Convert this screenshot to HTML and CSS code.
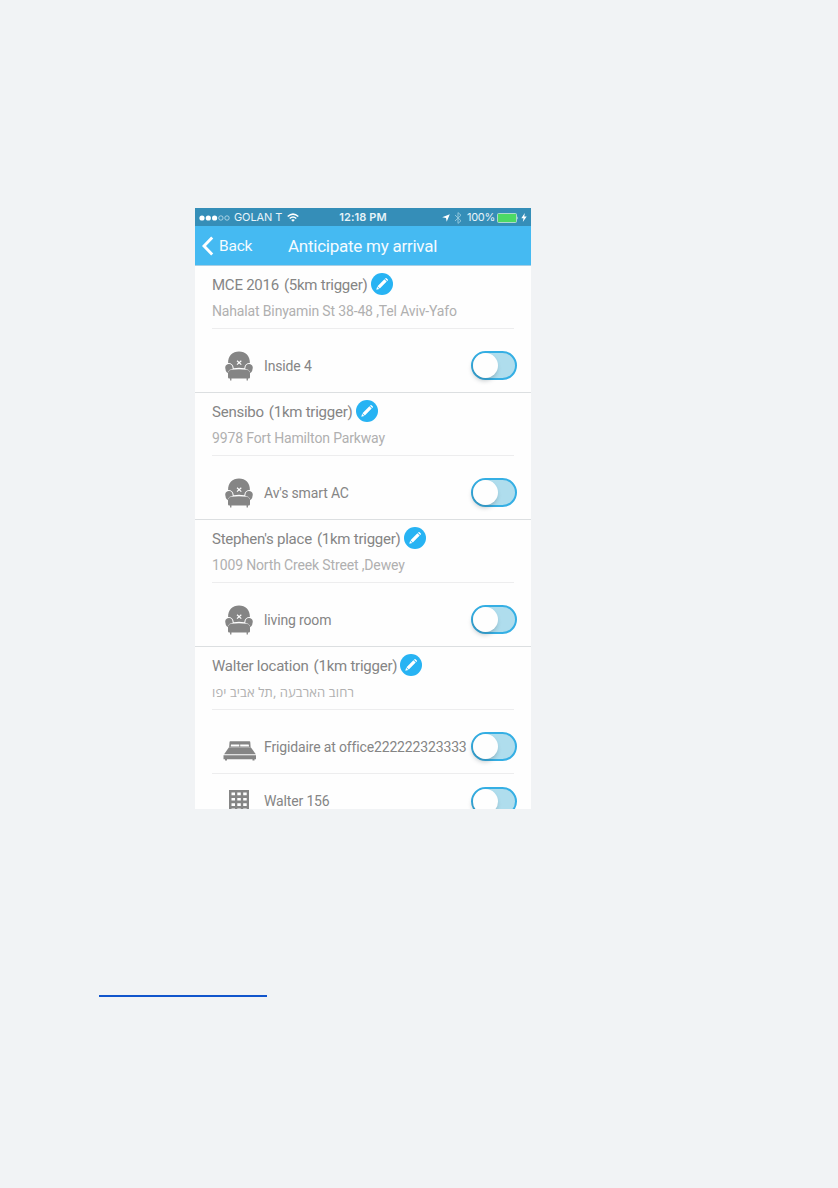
FILE: index.html
```html
<!DOCTYPE html>
<html>
<head>
  <meta charset="utf-8">
  <title>Anticipate my arrival</title>
  <link rel="stylesheet" href="styles.css">
</head>
<body>
  <svg class="defs">
    <symbol id="pencil" viewBox="0 0 22 22">
      <path d="M5.300 16.700l.8-3 2.200 2.200zM6.500 13.200l6.900-6.900 2.300 2.300-6.900 6.900zM14 5.700l.5-.5q.5-.5 1 0l1.300 1.300q.5.5 0 1l-.5.5z" fill="#fff"/>
    </symbol>
    <symbol id="chair" viewBox="0 0 28 30">
      <path d="M3.100 12C2.900 5 7.500 .6 14 .6S25.100 5 24.900 12C21.500 12 19.500 14 19.300 17.200Q14 16.400 8.700 17.200C8.500 14 6.500 12 3.100 12z"/>
      <path d="M.2 16.700C.2 14.500 2 13.100 4 13.100C6.500 13.100 7.700 15 7.700 18Q4.200 18.300 3.200 20.400L2.500 22.300Q.2 19.500 .2 16.700z"/>
      <path d="M27.800 16.700C27.800 14.500 26 13.100 24 13.100C21.500 13.100 20.300 15 20.300 18Q23.800 18.300 24.800 20.400L25.500 22.300Q27.800 19.500 27.800 16.700z"/>
      <path d="M3 21.500Q3.500 19 6.500 18.800Q14 17.500 21.500 18.800Q24.500 19 25 21.500V26.300Q25 27.500 23.800 27.500H22.900V29.600H21.600V27.500H6.400V29.600H5.100V27.500H4.200Q3 27.500 3 26.300z"/>
      <path d="M12 9.800l4.300 3.800M16.300 9.800L12 13.600" fill="none" stroke="#fff" stroke-width="1.200"/>
    </symbol>
    <symbol id="bed" viewBox="0 0 34 20">
      <path d="M7.200 .2H26.500Q27.300 .2 27.300 1.200L27.600 5.900H6.200L6.500 1.200Q6.600 .2 7.200 .2z"/>
      <path d="M7.700 5.500L8 3.600H16.300V5.500zM17.200 5.500V3.600H25.700L26.100 5.500z" fill="#fff"/>
      <path d="M6 6.200H27.800L32.800 13.200H1.100z"/>
      <path d="M.5 14.300H33V18.300H31.500V19.500H29.500V18.300H4V19.500H2V18.300H.5z"/>
    </symbol>
    <symbol id="building" viewBox="0 0 20 28">
      <path d="M0 0H20V28H0z"/>
      <path d="M2.500 2.600h3.500v2.700h-3.500zM8.300 2.600h3.500v2.700h-3.500zM14.200 2.600h3.500v2.700h-3.500zM2.500 7.900h3.500v2.700h-3.500zM8.300 7.900h3.500v2.700h-3.500zM14.200 7.900h3.500v2.700h-3.500zM2.500 13.200h3.500v2.700h-3.500zM8.300 13.200h3.500v2.700h-3.500zM14.200 13.200h3.500v2.700h-3.500zM2.500 18.500h3.500v2.700h-3.500zM8.300 18.500h3.500v2.700h-3.500zM14.200 18.500h3.500v2.700h-3.500z" fill="#fff"/>
    </symbol>
  </svg>

  <div class="phone">
    <div class="status">
      <div class="carrier">
        <svg class="dots" viewBox="0 0 31 6">
          <g fill="#fff"><circle cx="3" cy="3" r="2.600"/><circle cx="9.300" cy="3" r="2.600"/><circle cx="15.600" cy="3" r="2.600"/></g>
          <g fill="none" stroke="#c5e2ef" stroke-width=".8"><circle cx="21.900" cy="3" r="2.200"/><circle cx="28" cy="3" r="2.200"/></g>
        </svg>
        <span class="network">GOLAN T</span>
        <svg class="wifi" viewBox="0 0 12 9" fill="none" stroke="#fff" stroke-width="1.500">
          <path d="M.7 3.500Q6-1.300 11.300 3.500M2.700 5.500Q6 2.600 9.300 5.500"/>
          <path d="M6 8.800L4.100 6.900Q6 5.500 7.900 6.900z" fill="#fff" stroke="none"/>
        </svg>
      </div>
      <div class="clock">12:18 PM</div>
      <div class="power">
        <svg class="arrow" viewBox="0 0 8 8"><path d="M7.800 .2L4.700 7.800L4 4L.2 3.300z" fill="#fff"/></svg>
        <svg class="bluetooth" viewBox="0 0 8 12"><path d="M1 3L7 8.800L4 11.400V.6L7 3.200L1 9" fill="none" stroke="#9accdf" stroke-width=".9"/></svg>
        <span class="percent">100%</span>
        <svg class="battery" viewBox="0 0 22 10">
          <rect x=".5" y=".5" width="19" height="9" rx="1" fill="#4cd964" stroke="#b9dcd8" stroke-width=".9"/>
          <path d="M20.500 3.300Q21.800 5 20.500 6.700z" fill="#fff"/>
        </svg>
        <svg class="bolt" viewBox="0 0 6 9"><path d="M3.800 0L.3 5.200H2.500L1.800 9L5.700 3.600H3.300z" fill="#fff"/></svg>
      </div>
    </div>

    <div class="navbar">
      <svg class="chevron" viewBox="0 0 12 20"><path d="M10.200 1.500L2 10l8.200 8.500" fill="none" stroke="#fff" stroke-width="2.900"/></svg>
      <div class="back">Back</div>
      <div class="heading">Anticipate my arrival</div>
    </div>

    <div class="place">
      <div class="title"><span class="name">MCE 2016</span><span class="trigger">(5km trigger)</span><svg class="edit"><use href="#pencil"/></svg></div>
      <div class="address">Nahalat Binyamin St 38-48 ,Tel Aviv-Yafo</div>
      <div class="device">
        <svg class="icon chair"><use href="#chair"/></svg>
        <div class="label">Inside 4</div>
        <div class="switch"><div class="knob"></div></div>
      </div>
    </div>

    <div class="place">
      <div class="title"><span class="name">Sensibo</span><span class="trigger">(1km trigger)</span><svg class="edit"><use href="#pencil"/></svg></div>
      <div class="address">9978 Fort Hamilton Parkway</div>
      <div class="device">
        <svg class="icon chair"><use href="#chair"/></svg>
        <div class="label">Av's smart AC</div>
        <div class="switch"><div class="knob"></div></div>
      </div>
    </div>

    <div class="place">
      <div class="title"><span class="name">Stephen's place</span><span class="trigger">(1km trigger)</span><svg class="edit"><use href="#pencil"/></svg></div>
      <div class="address">1009 North Creek Street ,Dewey</div>
      <div class="device">
        <svg class="icon chair"><use href="#chair"/></svg>
        <div class="label">living room</div>
        <div class="switch"><div class="knob"></div></div>
      </div>
    </div>

    <div class="place">
      <div class="title"><span class="name">Walter location</span><span class="trigger">(1km trigger)</span><svg class="edit"><use href="#pencil"/></svg></div>
      <div class="address hebrew"><span dir="rtl">רחוב הארבעה ,תל אביב יפו</span></div>
      <div class="device">
        <svg class="icon bed"><use href="#bed"/></svg>
        <div class="label">Frigidaire at office222222323333</div>
        <div class="switch"><div class="knob"></div></div>
      </div>
      <div class="device next">
        <svg class="icon building"><use href="#building"/></svg>
        <div class="label">Walter 156</div>
        <div class="switch"><div class="knob"></div></div>
      </div>
    </div>
  </div>

  <div class="link_line"></div>
</body>
</html>
```
FILE: styles.css
```css
* {
  box-sizing: border-box;
}
body {
  margin: 0;
  padding-top: 208px;
  height: 1188px;
  overflow: hidden;
  background: #f1f3f5;
  font-family: Roboto, "Noto Sans", sans-serif;
  color: #858585;
}
svg {
  display: block;
  flex: none;
}
.defs {
  position: absolute;
  width: 0;
  height: 0;
}
.phone {
  width: 336px;
  height: 601px;
  margin-left: 195px;
  overflow: hidden;
  background: #fefefe;
}

.status {
  display: grid;
  grid-template-columns: 1fr 60px 1fr;
  align-items: center;
  height: 18px;
  padding: 1px 4px 0 4px;
  background: #358eb8;
  color: #e7f3f8;
  font-family: Inter, sans-serif;
  font-size: 11px;
  line-height: 17px;
  white-space: nowrap;
}
.carrier,
.power {
  display: flex;
  align-items: center;
}
.power {
  justify-content: flex-end;
}
.dots {
  width: 31px;
  height: 6px;
}
.network {
  margin-left: 4px;
  letter-spacing: -0.1px;
}
.wifi {
  width: 12px;
  height: 9px;
  margin-left: 5px;
}
.clock {
  text-align: center;
  font-weight: 600;
  letter-spacing: 0.1px;
}
.arrow {
  width: 8px;
  height: 8px;
}
.bluetooth {
  width: 8px;
  height: 12px;
  margin: 0 5px 0 4px;
}
.percent {
  letter-spacing: -0.3px;
}
.battery {
  width: 22px;
  height: 10px;
  margin: 0 2px;
}
.bolt {
  width: 6px;
  height: 9px;
}

.navbar {
  display: flex;
  align-items: center;
  height: 40px;
  padding-left: 7px;
  border-bottom: 1px solid #a9cfe4;
  background: #45baf2;
  color: #f4fbff;
}
.chevron {
  width: 12px;
  height: 20px;
}
.back {
  width: 74px;
  padding-left: 5px;
  font-size: 15.500px;
  letter-spacing: -0.2px;
}
.heading {
  font-size: 17px;
  letter-spacing: -0.25px;
}

.place {
  height: 127px;
  padding: 0 17px;
  border-bottom: 1px solid #dcdfe1;
}
.place:last-child {
  height: 164px;
  border-bottom: 0;
}
.title {
  display: flex;
  align-items: center;
  height: 36px;
  font-size: 15px;
  letter-spacing: -0.24px;
}
.name,
.trigger {
  padding-top: 1px;
}
.trigger {
  margin-left: 5px;
}
.edit {
  width: 22px;
  height: 22px;
  margin-left: 3px;
  border-radius: 50%;
  background: #27b3f3;
}
.address {
  height: 27px;
  border-bottom: 1px solid #ededee;
  color: #b0b0b0;
  font-size: 14px;
  line-height: 18px;
  letter-spacing: -0.15px;
}
.hebrew {
  font-family: "Open Sans", "DejaVu Sans", sans-serif;
  font-size: 13px;
  letter-spacing: 0.1px;
}
.device {
  display: flex;
  align-items: center;
  height: 64px;
  padding-top: 9px;
  margin-right: -3px;
}
.next {
  height: 55px;
  margin-top: -1px;
  padding-top: 0;
  margin-right: 0;
  border-top: 1px solid #ededee;
}
.icon {
  fill: #858585;
}
.chair {
  width: 28px;
  height: 30px;
  margin: 0 11px 0 13px;
}
.bed {
  width: 34px;
  height: 20px;
  margin: 8px 7px 0 11px;
}
.building {
  width: 20px;
  height: 28px;
  margin: 5px 15px 0 17px;
}
.label {
  flex: 1;
  font-size: 14px;
  letter-spacing: -0.15px;
  white-space: nowrap;
}
.switch {
  flex: none;
  width: 46px;
  height: 29px;
  border: 2px solid #35afe4;
  border-radius: 15px;
  background: #afdded;
}
.next .switch {
  margin-right: -3px;
}
.knob {
  width: 25px;
  height: 25px;
  border-radius: 50%;
  background: #fefefe;
  box-shadow: -1px 3px 4px rgba(40, 60, 70, 0.25);
}

.link_line {
  width: 168px;
  height: 2px;
  margin: 186px 0 0 99px;
  background: #1155cc;
}
```
